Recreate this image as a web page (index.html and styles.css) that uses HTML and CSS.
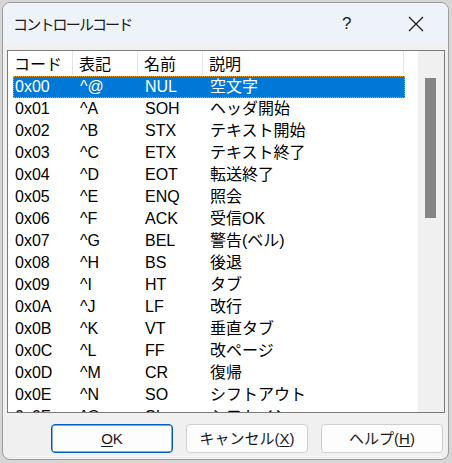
FILE: index.html
```html
<!DOCTYPE html>
<html lang="ja">
<head>
<meta charset="utf-8">
<title>コントロールコード</title>
<link rel="stylesheet" href="styles.css">
</head>
<body>
<div class="window">
  <div class="titlebar">
    <span class="title">コントロールコード</span>
    <span class="help">?</span>
    <span class="close"><svg width="16" height="16" viewBox="0 0 16 16"><path d="M1 1 L15 15 M15 1 L1 15" stroke="#1a1a1a" stroke-width="1.2" fill="none"/></svg></span>
  </div>
  <div class="content">
    <div class="listbox">
      <div class="listarea">
        <div class="header">
          <div class="hcell">コード</div>
          <div class="hcell">表記</div>
          <div class="hcell">名前</div>
          <div class="hcell wide">説明</div>
        </div>
        <div class="rows">
          <div class="row selected"><span class="c1">0x00</span><span class="c">^@</span><span class="c">NUL</span><span class="c wide">空文字</span></div>
          <div class="row"><span class="c1">0x01</span><span class="c">^A</span><span class="c">SOH</span><span class="c wide">ヘッダ開始</span></div>
          <div class="row"><span class="c1">0x02</span><span class="c">^B</span><span class="c">STX</span><span class="c wide">テキスト開始</span></div>
          <div class="row"><span class="c1">0x03</span><span class="c">^C</span><span class="c">ETX</span><span class="c wide">テキスト終了</span></div>
          <div class="row"><span class="c1">0x04</span><span class="c">^D</span><span class="c">EOT</span><span class="c wide">転送終了</span></div>
          <div class="row"><span class="c1">0x05</span><span class="c">^E</span><span class="c">ENQ</span><span class="c wide">照会</span></div>
          <div class="row"><span class="c1">0x06</span><span class="c">^F</span><span class="c">ACK</span><span class="c wide">受信OK</span></div>
          <div class="row"><span class="c1">0x07</span><span class="c">^G</span><span class="c">BEL</span><span class="c wide">警告(ベル)</span></div>
          <div class="row"><span class="c1">0x08</span><span class="c">^H</span><span class="c">BS</span><span class="c wide">後退</span></div>
          <div class="row"><span class="c1">0x09</span><span class="c">^I</span><span class="c">HT</span><span class="c wide">タブ</span></div>
          <div class="row"><span class="c1">0x0A</span><span class="c">^J</span><span class="c">LF</span><span class="c wide">改行</span></div>
          <div class="row"><span class="c1">0x0B</span><span class="c">^K</span><span class="c">VT</span><span class="c wide">垂直タブ</span></div>
          <div class="row"><span class="c1">0x0C</span><span class="c">^L</span><span class="c">FF</span><span class="c wide">改ページ</span></div>
          <div class="row"><span class="c1">0x0D</span><span class="c">^M</span><span class="c">CR</span><span class="c wide">復帰</span></div>
          <div class="row"><span class="c1">0x0E</span><span class="c">^N</span><span class="c">SO</span><span class="c wide">シフトアウト</span></div>
          <div class="row"><span class="c1">0x0F</span><span class="c">^O</span><span class="c">SI</span><span class="c wide">シフトイン</span></div>
        </div>
      </div>
      <div class="scrollbar"><div class="thumb"></div></div>
    </div>
    <div class="buttons">
      <button class="btn default"><u>O</u>K</button>
      <button class="btn">キャンセル(<u>X</u>)</button>
      <button class="btn">ヘルプ(<u>H</u>)</button>
    </div>
  </div>
</div>
</body>
</html>
```
FILE: styles.css
```css
* { box-sizing: border-box; }
html, body { margin: 0; padding: 0; }
body {
  background: #d6d6d6;
  width: 452px;
  height: 463px;
  overflow: hidden;
  font-family: "Liberation Sans", "Noto Sans CJK JP", sans-serif;
  color: #000;
}
.window {
  margin: 2px 0 0 2px;
  width: 447px;
  height: 458px;
  border: 1px solid #9c9c9c;
  border-radius: 8px;
  background: #f0f0f0;
  overflow: hidden;
  display: flex;
  flex-direction: column;
}
.titlebar {
  height: 41px;
  background: #eef2f9;
  display: flex;
  align-items: center;
  flex-shrink: 0;
}
.title {
  font-family: "Noto Sans CJK JP", sans-serif;
  font-size: 15px;
  letter-spacing: -1.8px;
  padding-left: 10px;
  color: #1a1a1a;
  flex: 1;
}
.help {
  font-family: "Liberation Sans", sans-serif;
  font-size: 17px;
  color: #1a1a1a;
  width: 16px;
  margin-right: 50px;
}
.close {
  display: flex;
  margin-right: 24px;
}
.content {
  padding: 6px 0 0 4px;
}
.listbox {
  width: 438px;
  height: 363px;
  border: 1px solid #7a7a7a;
  background: #fff;
  display: flex;
  overflow: hidden;
}
.listarea {
  width: 410px;
  overflow: hidden;
}
.header {
  display: flex;
  height: 25px;
}
.hcell {
  width: 65px;
  height: 24px;
  border-right: 1px solid #e5e5e5;
  font-family: "Noto Sans CJK JP", sans-serif;
  font-size: 16px;
  line-height: 24px;
  padding-left: 6px;
  white-space: nowrap;
}
.hcell.wide { width: 201px; }
.rows { font-size: 16px; }
.row {
  display: flex;
  height: 22px;
  line-height: 22px;
  margin-left: 5px;
  width: 392px;
  white-space: nowrap;
}
.row .c1 { width: 60px; padding-left: 2px; }
.row .c { width: 65px; padding-left: 7px; }
.row .c.wide { width: 202px; }
.row.selected {
  background: #0078d7;
  color: #fff;
  border: 1px dotted #f39c2a;
  line-height: 20px;
}
.row.selected .c1 { padding-left: 1px; width: 59px; }
.row.selected .c.wide { width: 200px; }
.scrollbar {
  width: 26px;
  background: #f0f0f0;
  padding: 27px 0 0 7px;
}
.thumb {
  width: 11px;
  height: 140px;
  background: #858585;
}
.buttons {
  display: flex;
  gap: 13px;
  padding: 11px 0 0 44px;
}
.btn {
  width: 122px;
  height: 29px;
  background: #fdfdfd;
  border: 1px solid #d0d0d0;
  border-radius: 4px;
  font-family: "Liberation Sans", "Noto Sans CJK JP", sans-serif;
  font-size: 15px;
  color: #1a1a1a;
  padding: 0;
  line-height: 27px;
}
.btn.default {
  border: 1px solid #005fb8;
  box-shadow: inset 0 0 0 0.5px #005fb8;
}
.btn u { text-underline-offset: 2px; }
```
